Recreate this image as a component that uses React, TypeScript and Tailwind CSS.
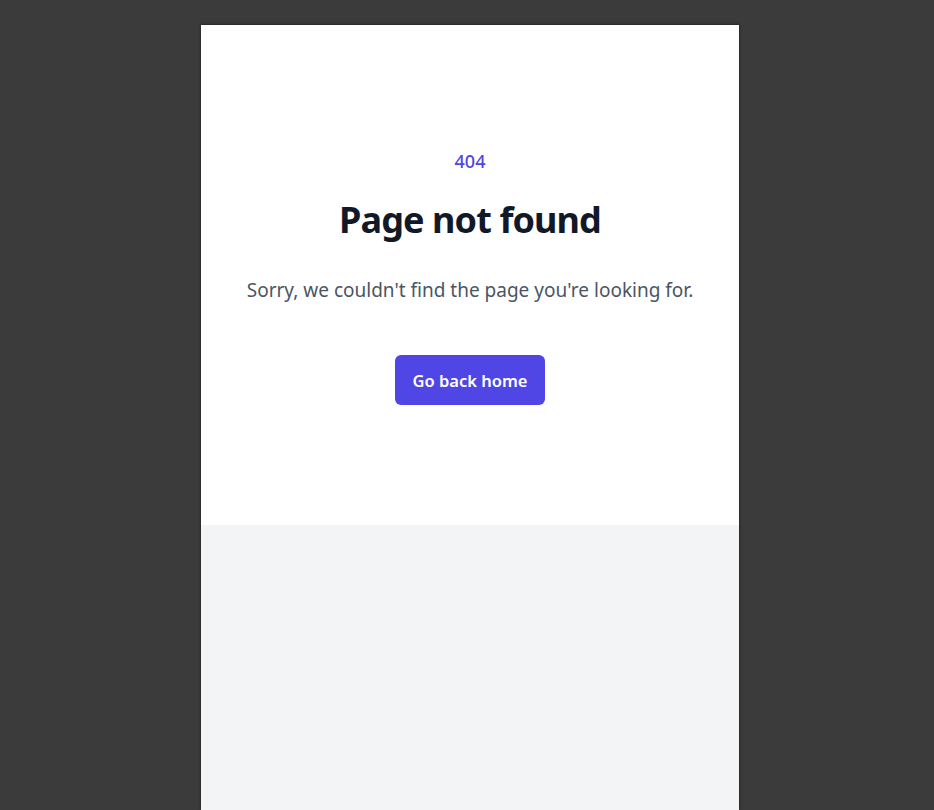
import React from 'react';

const font = { fontFamily: '"Noto Sans", "Open Sans", sans-serif' };

const NotFound = () => {
  return (
    <div className="min-h-screen bg-[#3b3b3b] flex pl-[201px] pt-[25px]" style={font}>
      <div className="w-[538px] min-h-[785px] flex flex-col bg-[#f3f4f6] shadow-[0_0_3px_rgba(0,0,0,0.6)]">
        {/* Error content */}
        <main className="h-[500px] bg-white flex flex-col items-center justify-center text-center px-6 pt-[2px]">
          <p className="text-lg font-medium text-[#4f46e5] leading-7">404</p>
          <h1 className="mt-[25px] text-[36px] leading-10 font-bold text-[#111827] tracking-tight">
            Page not found
          </h1>
          <p className="mt-9 text-[19px] leading-7 text-[#4b5563]">
            Sorry, we couldn't find the page you're looking for.
          </p>
          <div className="mt-[51px]">
            <a
              href="#"
              className="inline-flex items-center h-[50px] px-[18px] pt-[2px] rounded-md bg-[#4f46e5] text-white text-[16.5px] font-semibold"
            >
              Go back home
            </a>
          </div>
        </main>
        <div className="flex-1 bg-[#f3f4f6]" />
      </div>
    </div>
  );
};

export default function App() {
  return <NotFound />;
}
